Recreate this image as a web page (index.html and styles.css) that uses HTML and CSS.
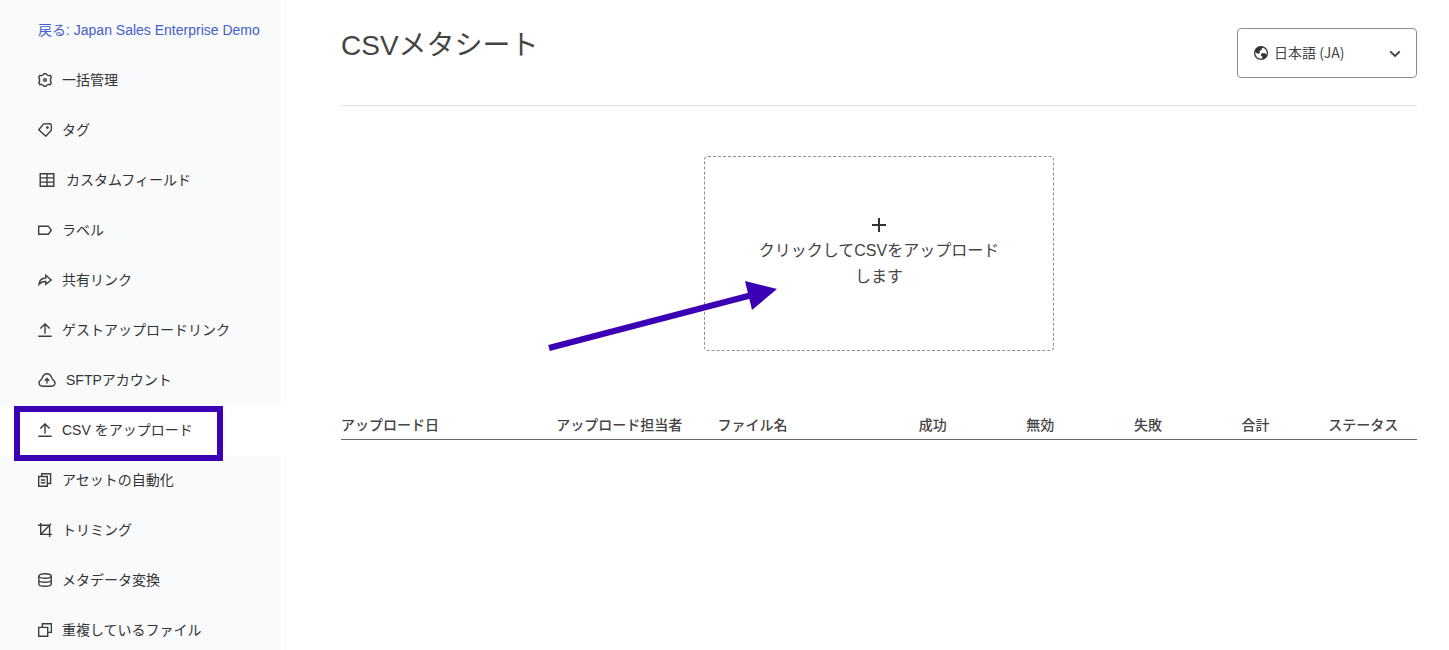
FILE: index.html
```html
<!DOCTYPE html>
<html lang="ja">
<head>
    <meta charset="UTF-8">
    <meta name="viewport" content="width=device-width, initial-scale=1.0">
    <title>CSVメタシート</title>
    <link rel="stylesheet" href="styles.css">
</head>
<body>
    <div class="layout">
        <nav class="sidebar">
            <a class="back" href="#">戻る: Japan Sales Enterprise Demo</a>
            <ul class="menu">
                <li><a href="#">
                    <svg width="14" height="14" viewBox="0 0 14 14"><path d="M5.2 1.8 6 .7h2l.8 1.1 1.6.8 1.9-.1 1 1.9-.8 1.4v2.4l.8 1.4-1 1.9-1.9-.1-1.6.8-.8 1.1H6l-.8-1.1-1.6-.8-1.9.1-1-1.9.8-1.4V5.8L.7 4.4l1-1.9 1.9.1z"/><circle cx="7" cy="7" r="1.4"/></svg>
                    一括管理</a></li>
                <li><a href="#">
                    <svg width="14" height="14" viewBox="0 0 14 14"><path d="M.8 6.8 5.6.9l6.8-.1 1 1-.2 5.7-5.4 5.7z"/><circle class="dot" cx="9.4" cy="4.6" r="1.4"/></svg>
                    タグ</a></li>
                <li><a href="#">
                    <svg width="18" height="14" viewBox="0 0 18 14"><path d="M2.2.7h13.6v12.6H2.2zM2.2 4.9h13.6M2.2 9.1h13.6M9 .7v12.6"/></svg>
                    カスタムフィールド</a></li>
                <li><a href="#">
                    <svg width="14" height="14" viewBox="0 0 14 14"><path d="M.7 3.2h9.6l3 4-3 4H.7z"/></svg>
                    ラベル</a></li>
                <li><a href="#">
                    <svg width="14" height="14" viewBox="0 0 14 14"><path d="M.9 11.4C1.4 7.5 3.6 5.1 7.8 5V2.2L13.2 7l-5.4 4.4V8.5C4.8 8.4 2.8 9.2.9 11.4z"/></svg>
                    共有リンク</a></li>
                <li><a href="#">
                    <svg width="14" height="14" viewBox="0 0 14 14"><path d="M7 10.7V1M2.3 5.6 7 .9l4.7 4.7M.3 13.2h13.4"/></svg>
                    ゲストアップロードリンク</a></li>
                <li><a href="#">
                    <svg width="18" height="14" viewBox="0 0 18 14"><path d="M5 13.3h8c4.300 0 5.200-4.300 2.300-6.200C14.300 6.500 14 5.600 13.500 4.300 11.600-.5 6.400-.5 4.500 4.300 4 5.600 3.700 6.500 2.700 7.100-.2 9 .7 13.300 5 13.300zM9 10.600V5.600M6.800 7.800 9 5.600l2.200 2.200"/></svg>
                    SFTPアカウント</a></li>
                <li class="active"><a href="#">
                    <svg width="14" height="14" viewBox="0 0 14 14"><path d="M7 10.7V1M2.3 5.6 7 .9l4.7 4.7M.3 13.2h13.4"/></svg>
                    CSV をアップロード</a></li>
                <li><a href="#">
                    <svg width="14" height="14" viewBox="0 0 14 14"><path d="M.7 3.5h8.6v9.8H.7zM3.7 3.5V.7h8.9v9.8H9.3M2.8 7h4.4M2.8 9.8h4.4"/></svg>
                    アセットの自動化</a></li>
                <li><a href="#">
                    <svg width="14" height="14" viewBox="0 0 14 14"><path d="M0 2.2h11.6V14M2.7 0v11.4H14M2.9 11.2 13 .8"/></svg>
                    トリミング</a></li>
                <li><a href="#">
                    <svg width="14" height="14" viewBox="0 0 14 14"><ellipse cx="7" cy="3" rx="6.2" ry="2.3"/><path d="M.8 3v8c0 1.3 2.8 2.3 6.2 2.3s6.2-1 6.2-2.3V3M.8 7c0 1.3 2.8 2.3 6.2 2.3s6.2-1 6.2-2.3"/></svg>
                    メタデータ変換</a></li>
                <li><a href="#">
                    <svg width="14" height="14" viewBox="0 0 14 14"><path d="M.7 4.4h9v8.9h-9zM4.4 4.4V.7h9v8.7H9.7"/></svg>
                    重複しているファイル</a></li>
            </ul>
        </nav>

        <main class="content">
            <header class="page-header">
                <h1>CSVメタシート</h1>
                <div class="language">
                    <svg class="globe" width="16" height="16" viewBox="0 0 16 16"><circle cx="8" cy="8" r="6.4"/><path class="land" d="M2 5.5 4.5 2.2 8.5 1.2l2 1.6-1.7.5-.2 1.8-2 .7.3 1.6-1.6 1.7L3.6 8 2 6.8zM8.5 8.4l2.8-.3 2.7 1.8-.8 2.1-2.8 2.2-1.2-.5.2-2-1.5-1.3z"/></svg>
                    <select aria-label="言語">
                        <option>日本語 (JA)</option>
                        <option>English (EN)</option>
                    </select>
                    <svg class="chevron" width="12" height="8" viewBox="0 0 12 8"><path d="m1.2 1.4 4.8 4.6 4.8-4.6"/></svg>
                </div>
            </header>

            <div class="upload">
                <button class="dropzone" type="button">
                    <svg width="16" height="16" viewBox="0 0 16 16"><path d="M8 1v14M1 8h14"/></svg>
                    <span>クリックしてCSVをアップロードします</span>
                </button>
                <svg class="arrow" width="230" height="72" viewBox="0 0 230 72"><path d="M1 68 204 15" /><polygon points="197,1 229,9 204,30"/></svg>
            </div>

            <table class="uploads">
                <thead>
                    <tr>
                        <th class="date">アップロード日</th>
                        <th class="user">アップロード担当者</th>
                        <th class="file">ファイル名</th>
                        <th class="count">成功</th>
                        <th class="count">無効</th>
                        <th class="count">失敗</th>
                        <th class="count">合計</th>
                        <th class="count">ステータス</th>
                    </tr>
                </thead>
            </table>
        </main>
    </div>
</body>
</html>
```
FILE: styles.css
```css
*,
*::after {
    box-sizing: border-box;
}

body {
    margin: 0;
    font-family: "Liberation Sans", "Noto Sans CJK JP", sans-serif;
    font-size: 14px;
    line-height: 20px;
    color: #333;
    background-color: #fff;
}

svg {
    flex: none;
    fill: none;
    stroke: #3d3d3d;
    stroke-width: 1.4;
}

.layout {
    display: flex;
    height: 100vh;
}

.sidebar {
    flex: 0 0 281px;
    overflow-y: auto;
    scrollbar-width: none;
    background-color: #f9fafc;
}

.back {
    display: block;
    padding: 20px 0 16px 38px;
    color: #4360c9;
    text-decoration: none;
    white-space: nowrap;
}

.menu {
    margin: 0;
    padding: 0;
    list-style: none;
}

.menu li {
    position: relative;
}

.menu a {
    display: flex;
    align-items: center;
    gap: 10px;
    height: 50px;
    padding: 0 0 2px 38px;
    color: #333;
    text-decoration: none;
}

.menu .dot {
    fill: #3d3d3d;
    stroke: none;
}

.menu .active {
    background-color: #fff;
}

/* highlight frame around the current page */
.menu .active::after {
    content: "";
    position: absolute;
    top: 0;
    left: 14px;
    z-index: 1;
    width: 209px;
    height: 55px;
    border: 6px solid #3b00b3;
    pointer-events: none;
}

.content {
    flex: 1;
    min-width: 0;
    padding: 28px 32px 0 60px;
}

.page-header {
    display: flex;
    justify-content: space-between;
    align-items: flex-start;
    padding-bottom: 27px;
    border-bottom: 1px solid #e3e3e5;
}

h1 {
    margin: 0;
    font-size: 28px;
    font-weight: 400;
    line-height: 36px;
    color: #444;
}

.language {
    position: relative;
    width: 180px;
}

.language select {
    width: 100%;
    height: 50px;
    padding: 0 36px 2px;
    border: 1px solid #8c8c96;
    border-radius: 4px;
    background-color: #fff;
    color: #444;
    font-family: "Noto Sans CJK JP", sans-serif;
    font-size: 14px;
    appearance: none;
}

.globe,
.chevron {
    position: absolute;
    pointer-events: none;
}

.globe {
    top: 17px;
    left: 16px;
}

.land {
    fill: #333;
    stroke: none;
}

.chevron {
    top: 22px;
    right: 16px;
    stroke-width: 1.8;
}

.upload {
    position: relative;
    width: 350px;
    margin: 50px auto 64px;
}

.dropzone {
    display: flex;
    flex-direction: column;
    align-items: center;
    justify-content: center;
    gap: 5px;
    width: 100%;
    height: 195px;
    padding: 0 50px;
    border: 1px dashed #8c8c96;
    border-radius: 4px;
    background-color: transparent;
    color: #444;
    font-family: inherit;
    font-size: 16px;
    line-height: 26px;
    cursor: pointer;
}

.dropzone svg {
    stroke: #333;
    stroke-width: 2;
}

.arrow {
    position: absolute;
    top: 124px;
    left: -156px;
    stroke: #3b00b3;
    stroke-width: 6;
    pointer-events: none;
}

.arrow polygon {
    fill: #3b00b3;
    stroke: none;
}

.uploads {
    width: 100%;
    table-layout: fixed;
    border-collapse: collapse;
}

.uploads th {
    padding: 0 0 4px;
    border-bottom: 1px solid #666;
    color: #444;
    font-weight: 500;
    text-align: left;
    white-space: nowrap;
}

.uploads .date {
    width: 20%;
}

.uploads .user,
.uploads .file {
    width: 15%;
}

.uploads .count {
    width: 10%;
    text-align: center;
}
```
